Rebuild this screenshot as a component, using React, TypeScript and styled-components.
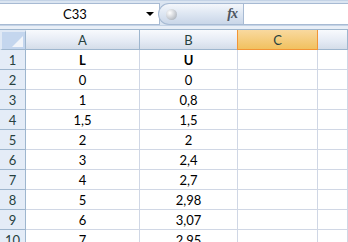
import React from 'react';
import styled, { createGlobalStyle } from 'styled-components';

const GlobalStyle = createGlobalStyle`
  html, body {
    margin: 0;
    padding: 0;
    background: #ffffff;
    overflow: hidden;
  }
`;

const Sheet = styled.div`
  width: 348px;
  height: 242px;
  overflow: hidden;
  font-family: Lato, 'Liberation Sans', sans-serif;
  background: #ffffff;
`;

const FormulaBar = styled.div`
  display: flex;
  align-items: stretch;
  height: 25px;
  box-sizing: border-box;
  padding-top: 2px;
  background: #dbe5f1;
  border-top: 1px solid #c4d3e6;
`;

const NameBox = styled.div`
  display: flex;
  align-items: center;
  width: 160px;
  box-sizing: border-box;
  background: #ffffff;
  border: 1px solid #a7bad3;
  border-left: none;
  font-size: 13px;
  color: #000000;
`;

const NameText = styled.span`
  flex: 1;
  text-align: center;
  padding-left: 4px;
`;

const DropArrow = styled.span`
  width: 0;
  height: 0;
  margin-right: 5px;
  border-left: 4px solid transparent;
  border-right: 4px solid transparent;
  border-top: 4px solid #000000;
`;

const FxArea = styled.div`
  position: relative;
  display: flex;
  align-items: center;
  justify-content: flex-end;
  width: 85px;
  box-sizing: border-box;
  margin-left: -2px;
  padding-right: 6px;
  border-radius: 12px 0 0 12px;
  border: 1px solid #a7bad3;
  border-right: none;
  background: linear-gradient(to bottom, #f4f7fb 0%, #dde6f2 50%, #c9d6e8 100%);
`;

const Knob = styled.span`
  position: absolute;
  left: 7px;
  top: 5px;
  width: 11px;
  height: 11px;
  border-radius: 50%;
  background: radial-gradient(circle at 35% 35%, #ffffff 0%, #c8ccd2 55%, #9aa3ae 100%);
`;

const Fx = styled.span`
  font-family: 'Liberation Serif', serif;
  font-style: italic;
  font-weight: bold;
  font-size: 14px;
  color: #4d5560;
  letter-spacing: -1px;
`;

const FormulaInput = styled.div`
  flex: 1;
  background: #ffffff;
  border: 1px solid #a7bad3;
  border-right: none;
`;

const Spacer = styled.div`
  height: 3px;
  background: #e9eff7;
  border-top: 1px solid #c4d3e6;
  border-bottom: 1px solid #9eb6ce;
`;

const Grid = styled.div`
  display: grid;
  grid-template-columns: 26px 114px 98px 80px 1fr;
  grid-auto-rows: 20px;
`;

const Corner = styled.div`
  position: relative;
  box-sizing: border-box;
  background: #c4d6ee;
  border: 2px solid #e0e9f5;
  border-right: 1px solid #9eb6ce;
  border-bottom: 1px solid #9eb6ce;
  &::after {
    content: '';
    position: absolute;
    right: 2px;
    bottom: 2px;
    width: 0;
    height: 0;
    border-left: 11px solid transparent;
    border-bottom: 11px solid #f2f5fa;
  }
`;

const ColHead = styled.div<{ $active?: boolean }>`
  display: flex;
  align-items: center;
  justify-content: center;
  box-sizing: border-box;
  font-size: 13px;
  color: #27413e;
  background: ${(p) =>
    p.$active
      ? 'linear-gradient(to bottom, #f9d99f 0%, #f1c15f 100%)'
      : 'linear-gradient(to bottom, #f8fafd 0%, #e4eaf4 60%, #d4dde9 100%)'};
  border-right: 1px solid ${(p) => (p.$active ? '#f29536' : '#9eb6ce')};
  border-bottom: 1px solid ${(p) => (p.$active ? '#f29536' : '#9eb6ce')};
  ${(p) => (p.$active ? 'border-left: 1px solid #f29536; margin-left: -1px;' : '')}
`;

const RowHead = styled.div`
  display: flex;
  align-items: center;
  justify-content: center;
  box-sizing: border-box;
  font-size: 13px;
  color: #27413e;
  background: #e4ecf7;
  border-right: 1px solid #9eb6ce;
  border-bottom: 1px solid #9eb6ce;
`;

const Cell = styled.div<{ $bold?: boolean }>`
  display: flex;
  align-items: center;
  justify-content: center;
  box-sizing: border-box;
  font-size: 13px;
  font-weight: ${(p) => (p.$bold ? 700 : 400)};
  color: #000000;
  border-right: 1px solid #d0d7e5;
  border-bottom: 1px solid #d0d7e5;
`;

const rows: [string, string][] = [
  ['L', 'U'],
  ['0', '0'],
  ['1', '0,8'],
  ['1,5', '1,5'],
  ['2', '2'],
  ['3', '2,4'],
  ['4', '2,7'],
  ['5', '2,98'],
  ['6', '3,07'],
  ['7', '2,95'],
];

const columns = ['A', 'B', 'C', ''];

const App = () => {
  return (
    <Sheet>
      <GlobalStyle />
      <FormulaBar>
        <NameBox>
          <NameText>C33</NameText>
          <DropArrow />
        </NameBox>
        <FxArea>
          <Knob />
          <Fx>fx</Fx>
        </FxArea>
        <FormulaInput />
      </FormulaBar>
      <Spacer />
      <Grid>
        <Corner />
        {columns.map((c, i) => (
          <ColHead key={i} $active={c === 'C'}>
            {c}
          </ColHead>
        ))}
        {rows.map(([a, b], i) => (
          <React.Fragment key={i}>
            <RowHead>{i + 1}</RowHead>
            <Cell $bold={i === 0}>{a}</Cell>
            <Cell $bold={i === 0}>{b}</Cell>
            <Cell />
            <Cell />
          </React.Fragment>
        ))}
      </Grid>
    </Sheet>
  );
};

export default App;
